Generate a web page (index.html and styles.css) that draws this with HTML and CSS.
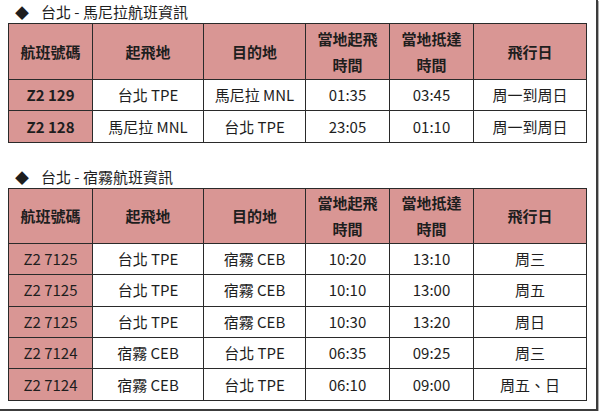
FILE: index.html
```html
<!DOCTYPE html>
<html lang="zh-Hant">
<head>
<meta charset="utf-8">
<link rel="stylesheet" href="styles.css">
</head>
<body>
<div class="frame">
  <div class="title"><span class="dia">◆</span>台北 - 馬尼拉航班資訊</div>
  <table class="flights first">
    <colgroup>
      <col class="c1"><col class="c2"><col class="c3"><col class="c4"><col class="c5"><col class="c6">
    </colgroup>
    <thead>
      <tr><th>航班號碼</th><th>起飛地</th><th>目的地</th><th>當地起飛<br>時間</th><th>當地抵達<br>時間</th><th>飛行日</th></tr>
    </thead>
    <tbody>
      <tr><td class="code bold">Z2 129</td><td>台北 TPE</td><td>馬尼拉 MNL</td><td>01:35</td><td>03:45</td><td>周一到周日</td></tr>
      <tr><td class="code bold">Z2 128</td><td>馬尼拉 MNL</td><td>台北 TPE</td><td>23:05</td><td>01:10</td><td>周一到周日</td></tr>
    </tbody>
  </table>

  <div class="title second"><span class="dia">◆</span>台北 - 宿霧航班資訊</div>
  <table class="flights">
    <colgroup>
      <col class="c1"><col class="c2"><col class="c3"><col class="c4"><col class="c5"><col class="c6">
    </colgroup>
    <thead>
      <tr><th>航班號碼</th><th>起飛地</th><th>目的地</th><th>當地起飛<br>時間</th><th>當地抵達<br>時間</th><th>飛行日</th></tr>
    </thead>
    <tbody>
      <tr><td class="code">Z2 7125</td><td>台北 TPE</td><td>宿霧 CEB</td><td>10:20</td><td>13:10</td><td>周三</td></tr>
      <tr><td class="code">Z2 7125</td><td>台北 TPE</td><td>宿霧 CEB</td><td>10:10</td><td>13:00</td><td>周五</td></tr>
      <tr><td class="code">Z2 7125</td><td>台北 TPE</td><td>宿霧 CEB</td><td>10:30</td><td>13:20</td><td>周日</td></tr>
      <tr><td class="code">Z2 7124</td><td>宿霧 CEB</td><td>台北 TPE</td><td>06:35</td><td>09:25</td><td>周三</td></tr>
      <tr><td class="code">Z2 7124</td><td>宿霧 CEB</td><td>台北 TPE</td><td>06:10</td><td>09:00</td><td>周五、日</td></tr>
    </tbody>
  </table>
</div>
</body>
</html>
```

FILE: styles.css
```css
html, body {
  margin: 0;
  padding: 0;
  background: #ffffff;
}
body {
  font-family: "Noto Sans CJK TC", "Noto Sans", sans-serif;
  color: #1e1e1e;
}
.frame {
  width: 598px;
  height: 411px;
  box-sizing: border-box;
  border-right: 2px solid #3c3c3c;
  border-bottom: 2px solid #3c3c3c;
  box-shadow: 1px 1px 0 #b0b0b0;
  padding: 1px 0 0 8px;
}
.title {
  height: 22px;
  line-height: 22px;
  font-size: 15px;
  padding-left: 7px;
}
.title.second {
  margin-top: 23px;
}
.dia {
  font-size: 14px;
  margin-right: 12px;
}
.flights {
  border-collapse: collapse;
  table-layout: fixed;
  width: 578px;
  font-size: 15px;
}
.c1 { width: 84px; }
.c2 { width: 111px; }
.c3 { width: 102px; }
.c4 { width: 84px; }
.c5 { width: 84px; }
.c6 { width: 113px; }
.flights th,
.flights td {
  border: 1px solid #2a2a2a;
  text-align: center;
  padding: 0;
}
.flights th {
  background: #d99694;
  font-weight: bold;
  height: 54px;
  line-height: 26px;
  font-size: 15px;
}
.flights.first th {
  height: 55px;
}
.flights td {
  height: 30.4px;
  line-height: 20px;
}
.flights td.code {
  background: #d99694;
}
.flights td.bold {
  font-weight: bold;
}
```
